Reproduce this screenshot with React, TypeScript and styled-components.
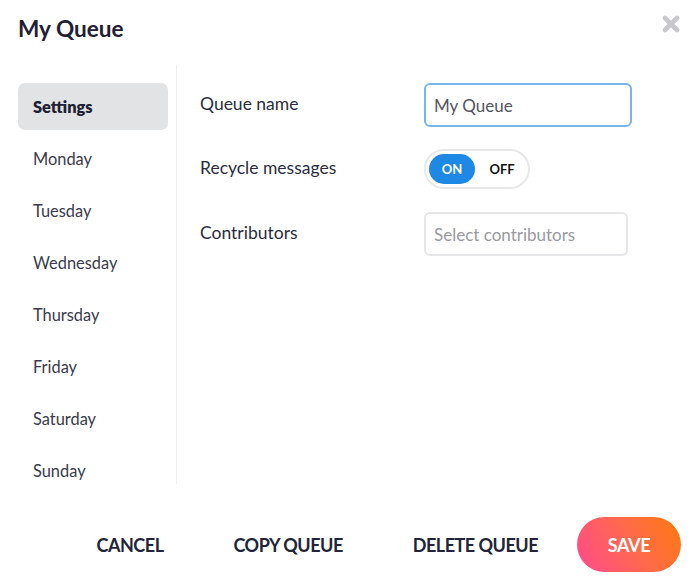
import React from "react"
import styled, { createGlobalStyle } from "styled-components"

const GlobalStyle = createGlobalStyle`
  html, body {
    margin: 0;
    padding: 0;
    background: #ffffff;
  }
  body {
    font-family: "Lato", "Noto Sans", sans-serif;
    color: #22243a;
  }
  * {
    box-sizing: border-box;
  }
`

const Dialog = styled.div`
  width: 692px;
  height: 580px;
  display: flex;
  flex-direction: column;
  background: #ffffff;
`

const Header = styled.div`
  height: 65px;
  display: flex;
  align-items: flex-start;
  justify-content: space-between;
  padding: 14px 12px 0 18px;
`

const Title = styled.h1`
  margin: 0;
  font-size: 22.6px;
  font-weight: 700;
  line-height: 30px;
  color: #1f2033;
`

const CloseButton = styled.button`
  border: none;
  background: none;
  padding: 0;
  margin-top: 1px;
  width: 18px;
  height: 18px;
  cursor: pointer;
  display: flex;
`

const Body = styled.div`
  display: flex;
  height: 419px;
`

const Sidebar = styled.nav`
  width: 177px;
  padding: 18px 8px 0 18px;
  border-right: 1px solid #f0f0f2;
  display: flex;
  flex-direction: column;
  gap: 5px;
`

const MenuItem = styled.div<{ $active?: boolean }>`
  height: 47px;
  flex-shrink: 0;
  display: flex;
  align-items: center;
  padding-left: 15px;
  padding-bottom: 1px;
  border-radius: 7px;
  font-size: 16.4px;
  font-weight: ${(p) => (p.$active ? 800 : 400)};
  color: ${(p) => (p.$active ? "#1f2033" : "#3a3b4c")};
  background: ${(p) => (p.$active ? "#e2e3e5" : "transparent")};
`

const Content = styled.div`
  flex: 1;
  padding: 18px 0 0 23px;
  display: grid;
  grid-template-columns: 224px auto;
  grid-auto-rows: min-content;
  row-gap: 22px;
  align-items: center;
`

const Label = styled.div`
  font-size: 17.5px;
  color: #2b2c3e;
  margin-top: -3px;
`

const TextInput = styled.input<{ $focused?: boolean; $width: number }>`
  width: ${(p) => p.$width}px;
  height: 44px;
  margin-top: ${(p) => (p.$focused ? 0 : 1)}px;
  border: 2px solid ${(p) => (p.$focused ? "#76b6ec" : "#e6e6e8")};
  border-radius: 6px;
  padding: 0 8px;
  font-family: "Lato", "Noto Sans", sans-serif;
  font-size: 17px;
  color: #555560;
  outline: none;
  &::placeholder {
    color: #9a9a9f;
  }
`

const Toggle = styled.div`
  width: 106px;
  height: 40px;
  border: 2px solid #e8e8ea;
  border-radius: 20px;
  padding: 3px;
  display: flex;
  align-items: center;
`

const ToggleOption = styled.div<{ $on?: boolean }>`
  width: 46px;
  height: 30px;
  border-radius: 15px;
  display: flex;
  align-items: center;
  justify-content: center;
  font-size: 13px;
  font-weight: 700;
  color: ${(p) => (p.$on ? "#ffffff" : "#111111")};
  background: ${(p) => (p.$on ? "#1e88e5" : "transparent")};
  margin-left: ${(p) => (p.$on ? "0" : "4px")};
`

const Footer = styled.div`
  flex: 1;
  display: flex;
  align-items: center;
  justify-content: flex-end;
  padding: 25px 11px 0 0;
`

const TextButton = styled.button`
  border: none;
  background: none;
  padding: 0 35px;
  font-family: "Lato", "Noto Sans", sans-serif;
  font-size: 18px;
  font-weight: 700;
  letter-spacing: -0.5px;
  color: #22243a;
  cursor: pointer;
`

const SaveButton = styled.button`
  margin-left: 4px;
  width: 104px;
  height: 55px;
  border: none;
  border-radius: 28px;
  background: linear-gradient(60deg, #ff4a8e 0%, #ff6a4a 55%, #ff7a0c 100%);
  font-family: "Lato", "Noto Sans", sans-serif;
  font-size: 18px;
  font-weight: 700;
  letter-spacing: -0.4px;
  color: #ffffff;
  cursor: pointer;
`

const days = [
  "Monday",
  "Tuesday",
  "Wednesday",
  "Thursday",
  "Friday",
  "Saturday",
  "Sunday",
]

const CloseIcon: React.FC = () => (
  <svg width="18" height="18" viewBox="0 0 18 18">
    <path
      d="M3 3 L15 15 M15 3 L3 15"
      stroke="#c8c8ca"
      strokeWidth="4.6"
      strokeLinecap="round"
    />
  </svg>
)

const App: React.FC = () => {
  return (
    <>
      <GlobalStyle />
      <Dialog>
        <Header>
          <Title>{"My Queue"}</Title>
          <CloseButton aria-label={"Close"}>
            <CloseIcon />
          </CloseButton>
        </Header>
        <Body>
          <Sidebar>
            <MenuItem $active>{"Settings"}</MenuItem>
            {days.map((day) => (
              <MenuItem key={day}>{day}</MenuItem>
            ))}
          </Sidebar>
          <Content>
            <Label>{"Queue name"}</Label>
            <TextInput $focused $width={208} defaultValue={"My Queue"} />
            <Label>{"Recycle messages"}</Label>
            <Toggle>
              <ToggleOption $on>{"ON"}</ToggleOption>
              <ToggleOption>{"OFF"}</ToggleOption>
            </Toggle>
            <Label>{"Contributors"}</Label>
            <TextInput $width={204} placeholder={"Select contributors"} />
          </Content>
        </Body>
        <Footer>
          <TextButton>{"CANCEL"}</TextButton>
          <TextButton>{"COPY QUEUE"}</TextButton>
          <TextButton>{"DELETE QUEUE"}</TextButton>
          <SaveButton>{"SAVE"}</SaveButton>
        </Footer>
      </Dialog>
    </>
  )
}

export default App
